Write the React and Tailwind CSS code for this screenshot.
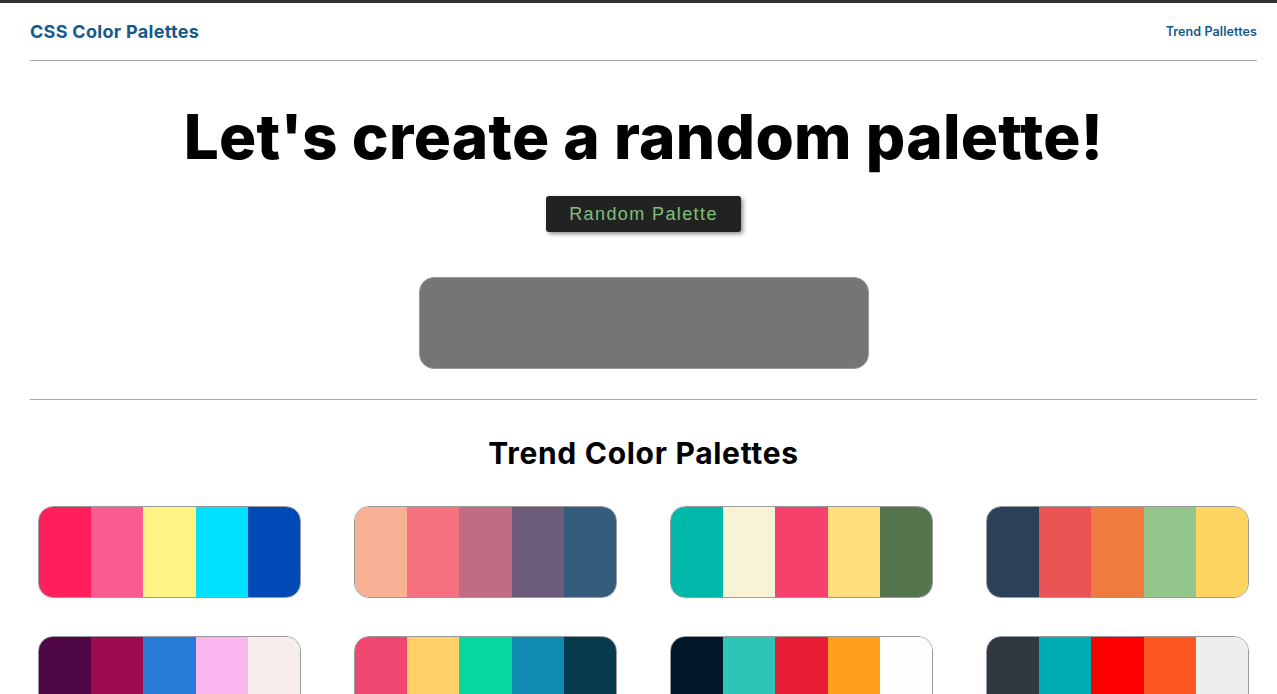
import React from "react";

const palettes = [
  ["#FF1F5A", "#F95C90", "#FFF483", "#00E0FF", "#004AB7"],
  ["#F8B195", "#F67280", "#C06C84", "#6C5B7B", "#355C7D"],
  ["#00B8A9", "#F8F3D4", "#F6416C", "#FFDE7D", "#55754F"],
  ["#2D4059", "#EA5455", "#F07B3F", "#93C68A", "#FFD460"],
  ["#4F0645", "#9D0B4F", "#287BD7", "#F8B5EE", "#F7EDEB"],
  ["#EF476F", "#FFD166", "#06D6A0", "#118AB2", "#073B4C"],
  ["#011627", "#2EC4B6", "#E71D36", "#FF9F1C", "#FDFFFC"],
  ["#303841", "#00ADB5", "#FF0000", "#FF5722", "#EEEEEE"],
];

export default function App() {
  return (
    <div
      className="min-h-[694px] bg-white border-t-[3px] border-[#333333]"
      style={{ fontFamily: "Inter, 'Open Sans', sans-serif" }}
    >
      <div className="ml-[30px] mr-[20px]">
        <header className="flex items-center justify-between h-[58px] border-b border-[#aaaaaa]">
          <div className="text-[18px] font-bold text-[#155a8a] tracking-[0.3px]">CSS Color Palettes</div>
          <div className="pt-[2px] text-[12.5px] font-semibold text-[#155a8a] tracking-[0.1px]">Trend Pallettes</div>
        </header>

        <section className="flex flex-col items-center border-b border-[#aaaaaa] pb-[30px]">
          <h1 className="mt-[37px] text-[62px] leading-[78px] font-extrabold text-black tracking-[0.3px]">
            Let's create a random palette!
          </h1>
          <button
            className="mt-[20px] w-[195px] h-[36px] bg-[#222222] rounded-[3px] text-[#7fc07f] text-[18px] tracking-[1.4px] shadow-[2px_2px_4px_rgba(0,0,0,0.45)]"
            style={{ fontFamily: "'Liberation Sans', Arial, sans-serif" }}
          >
            Random Palette
          </button>
          <div className="mt-[45px] w-[450px] h-[92px] bg-[#757575] rounded-[15px] border border-[#9a9a9a]" />
        </section>

        <section className="flex flex-col">
          <h2 className="mt-[35px] text-center text-[30px] leading-[36px] font-bold text-black tracking-[0.7px]">Trend Color Palettes</h2>
          <div className="mt-[35px] pl-[8px] grid grid-cols-[repeat(4,263px)] gap-x-[53px] gap-y-[38px]">
            {palettes.map((p, i) => (
              <div key={i} className="h-[92px] flex rounded-[15px] overflow-hidden border border-[#9a9a9a]">
                {p.map((c, j) => (
                  <div key={j} className="flex-1" style={{ backgroundColor: c }} />
                ))}
              </div>
            ))}
          </div>
        </section>
      </div>
    </div>
  );
}
